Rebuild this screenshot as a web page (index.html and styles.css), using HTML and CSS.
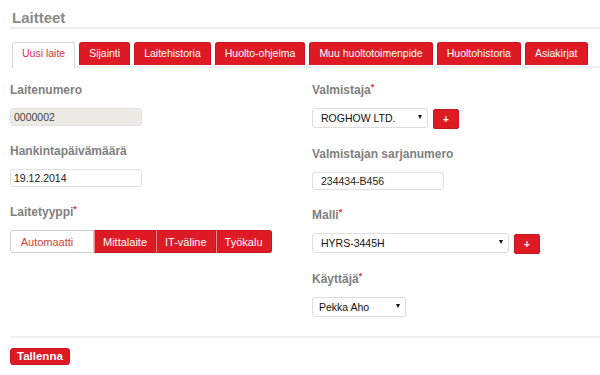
FILE: index.html
```html
<!DOCTYPE html>
<html lang="fi">
<head>
  <meta charset="UTF-8">
  <meta name="viewport" content="width=device-width, initial-scale=1.0">
  <title>Laitteet</title>
  <link rel="stylesheet" href="styles.css">
</head>
<body>

  <div class="page">
    <header class="page-header">
      <h1>Laitteet</h1>
    </header>

    <nav class="tabs">
      <a class="tab active" href="#">Uusi laite</a>
      <a class="tab" href="#">Sijainti</a>
      <a class="tab" href="#">Laitehistoria</a>
      <a class="tab" href="#">Huolto-ohjelma</a>
      <a class="tab" href="#">Muu huoltotoimenpide</a>
      <a class="tab" href="#">Huoltohistoria</a>
      <a class="tab" href="#">Asiakirjat</a>
    </nav>

    <form class="device-form">
      <div class="columns">
        <div class="column left">
          <div class="field">
            <label for="laitenumero">Laitenumero</label>
            <input type="text" id="laitenumero" class="input readonly" value="0000002" readonly>
          </div>
          <div class="field">
            <label for="hankinta">Hankintapäivämäärä</label>
            <input type="text" id="hankinta" class="input" value="19.12.2014">
          </div>
          <div class="field">
            <label>Laitetyyppi<span class="req">*</span></label>
            <div class="btn-group">
              <button type="button" class="seg active">Automaatti</button>
              <button type="button" class="seg">Mittalaite</button>
              <button type="button" class="seg">IT-väline</button>
              <button type="button" class="seg">Työkalu</button>
            </div>
          </div>
        </div>

        <div class="column right">
          <div class="field">
            <label for="valmistaja">Valmistaja<span class="req">*</span></label>
            <div class="row">
              <span class="select-wrap w-valmistaja">
                <select id="valmistaja" class="select"><option>ROGHOW LTD.</option></select>
              </span>
              <button type="button" class="plus">+</button>
            </div>
          </div>
          <div class="field">
            <label for="sarja">Valmistajan sarjanumero</label>
            <input type="text" id="sarja" class="input serial" value="234434-B456">
          </div>
          <div class="field">
            <label for="malli">Malli<span class="req">*</span></label>
            <div class="row">
              <span class="select-wrap w-malli">
                <select id="malli" class="select"><option>HYRS-3445H</option></select>
              </span>
              <button type="button" class="plus">+</button>
            </div>
          </div>
          <div class="field">
            <label for="kayttaja">Käyttäjä<span class="req">*</span></label>
            <span class="select-wrap w-kayttaja">
              <select id="kayttaja" class="select user"><option>Pekka Aho</option></select>
            </span>
          </div>
        </div>
      </div>

      <div class="form-footer">
        <button type="submit" class="save">Tallenna</button>
      </div>
    </form>
  </div>

</body>
</html>
```

FILE: styles.css
```css
body {
  font-family: "Liberation Sans", Arial, sans-serif;
  margin: 0;
  padding: 0;
  background-color: #fff;
  color: #333;
}
.page {
  padding-left: 10px;
}
.page-header {
  border-bottom: 2px solid #ececec;
  height: 29px;
  box-sizing: border-box;
  padding-left: 2px;
}
.page-header h1 {
  margin: 0;
  padding-top: 9px;
  font-size: 15px;
  font-weight: bold;
  color: #8a8a8a;
}
.tabs {
  display: flex;
  gap: 4px;
  margin-top: 13px;
  padding-left: 2px;
  border-bottom: 2px solid #eeeeee;
  height: 24px;
}
.tab {
  display: block;
  height: 23px;
  line-height: 21px;
  box-sizing: border-box;
  padding: 0 9px;
  font-size: 10.5px;
  color: #fff;
  text-decoration: none;
  background-color: #de1b25;
  border: 1px solid #c9151d;
  border-bottom: none;
  border-radius: 3px 3px 0 0;
}
.tab.active {
  background-color: #fff;
  color: #e0333b;
  border-color: #d6d6d6;
  height: 26px;
  padding: 0 9px;
}
.device-form {
  padding-top: 14px;
}
.columns {
  display: flex;
}
.column.left {
  width: 302px;
}
.column.right {
  flex: 1;
}
.field {
  margin-bottom: 17px;
}
.field label {
  display: block;
  height: 16px;
  line-height: 16px;
  margin-bottom: 10px;
  font-size: 12px;
  font-weight: bold;
  color: #7f7f7f;
}
.req {
  color: #e0333b;
  font-size: 9px;
  vertical-align: top;
  position: relative;
  top: -3px;
}
.input {
  display: block;
  box-sizing: border-box;
  width: 132px;
  height: 18px;
  padding: 0 3px;
  font-family: inherit;
  font-size: 10.5px;
  color: #222;
  border: 1px solid #e1e1e1;
  border-radius: 3px;
  background: #fff;
}
.input.readonly {
  background-color: #ebeae5;
  color: #444;
}
.input.serial {
  width: 132px;
  padding-left: 8px;
}
.row {
  display: flex;
  align-items: flex-start;
  gap: 5px;
}
.select-wrap {
  position: relative;
  display: inline-block;
}
.select-wrap::after {
  content: "";
  position: absolute;
  right: 6px;
  top: 7px;
  border-left: 2.5px solid transparent;
  border-right: 2.5px solid transparent;
  border-top: 4px solid #111;
  pointer-events: none;
}
.select {
  appearance: none;
  -webkit-appearance: none;
  display: block;
  box-sizing: border-box;
  width: 100%;
  height: 20px;
  padding: 0 14px 0 8px;
  font-family: inherit;
  font-size: 10.5px;
  color: #111;
  border: 1px solid #dedede;
  border-radius: 3px;
  background: #fff;
}
.select.user {
  padding-left: 6px;
}
.w-valmistaja {
  width: 116px;
}
.w-malli {
  width: 197px;
}
.w-kayttaja {
  width: 94px;
}
.plus {
  width: 26px;
  height: 20px;
  margin-top: 1px;
  padding: 0;
  border: 1px solid #c9151d;
  border-radius: 2px;
  background-color: #de1b25;
  color: #fff;
  font-family: inherit;
  font-size: 10px;
  font-weight: bold;
  cursor: pointer;
}
.btn-group {
  display: flex;
}
.seg {
  height: 23px;
  padding: 0 8px;
  margin: 0;
  font-family: inherit;
  font-size: 11px;
  color: #fff;
  background-color: #de1b25;
  border: 1px solid #c9151d;
  border-left: 1px solid #ec8a8e;
  cursor: pointer;
}
.seg:last-child {
  border-radius: 0 3px 3px 0;
}
.seg.active {
  width: 84px;
  padding: 0 10px 0 0;
  color: #d6443a;
  background-color: #fff;
  border: 1px solid #cfcfcf;
  border-radius: 3px 0 0 3px;
}
.form-footer {
  margin-top: 2px;
  border-top: 2px solid #efefef;
  padding-top: 8px;
}
.save {
  height: 17px;
  padding: 0 6px;
  font-family: inherit;
  font-size: 11.5px;
  font-weight: bold;
  color: #fff;
  background-color: #de1b25;
  border: 1px solid #c9151d;
  border-radius: 3px;
  cursor: pointer;
}
```
